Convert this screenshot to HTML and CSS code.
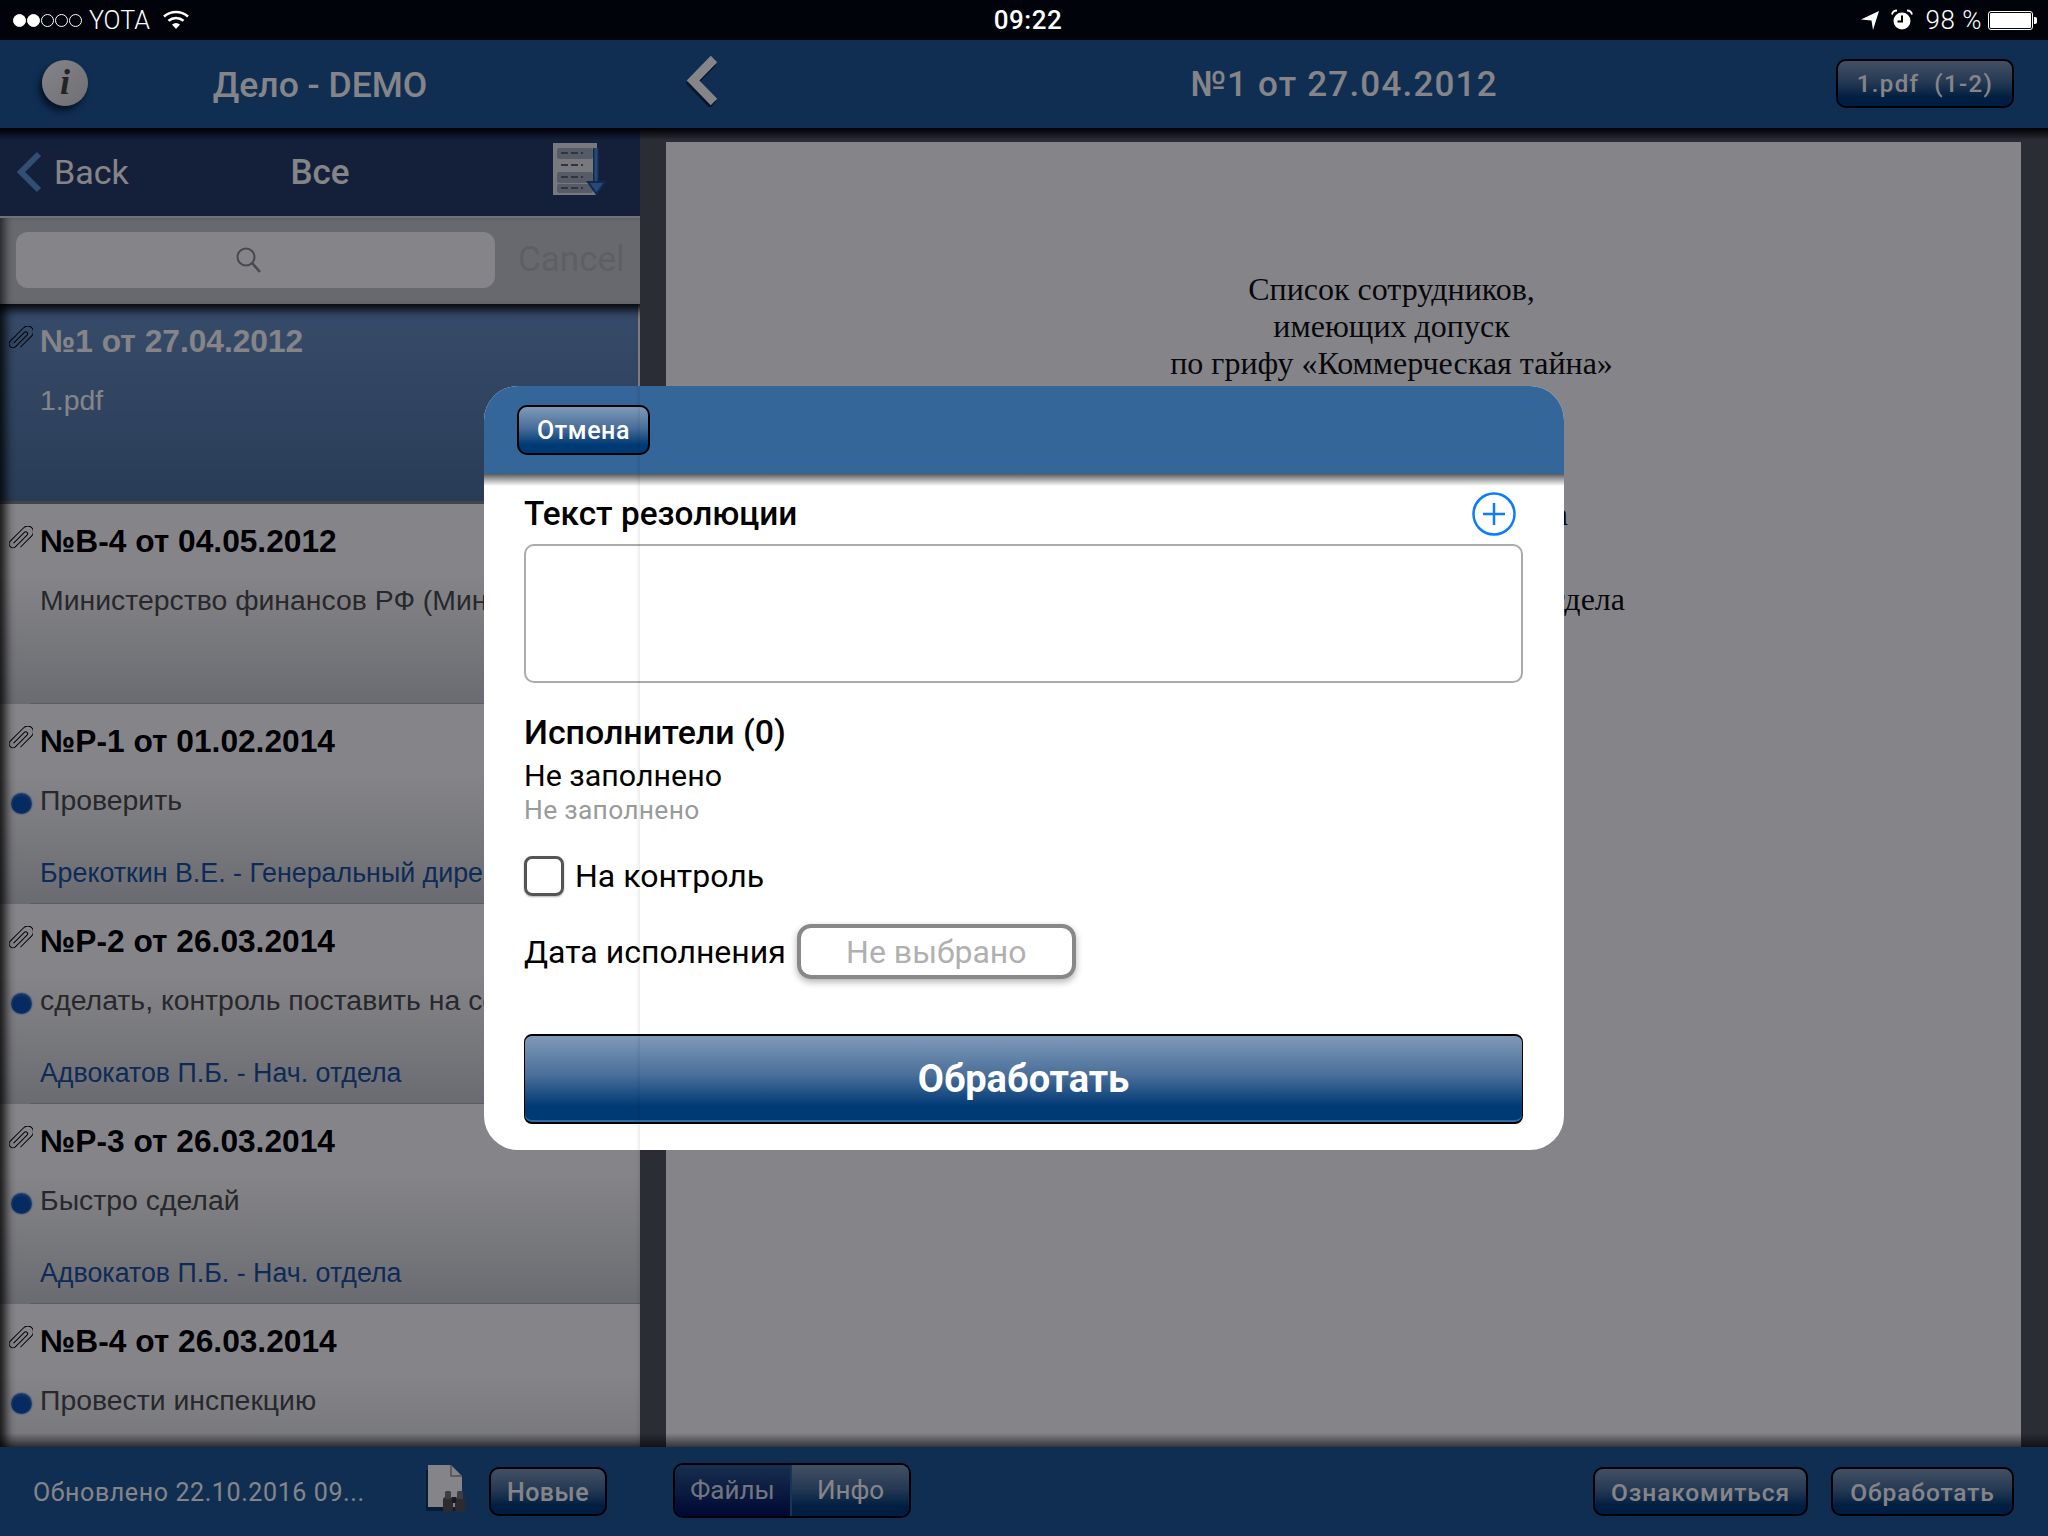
FILE: index.html
```html
<!DOCTYPE html>
<html lang="ru">
<head>
  <meta charset="UTF-8">
  <title>Дело - DEMO</title>
  <link rel="stylesheet" href="styles.css">
</head>
<body>
  <div class="ipad">
    <div class="status">
      <div class="status-left">
        <span class="signal"><i class="on"></i><i class="on"></i><i></i><i></i><i></i></span>
        <span class="carrier">YOTA</span>
        <svg class="wifi" width="26" height="20" viewBox="0 0 26 20">
          <path d="M1 6.5C8 .5 18 .5 25 6.5" fill="none" stroke="#fff" stroke-width="2.6"/>
          <path d="M5.5 10.8C10 7 16 7 20.5 10.8" fill="none" stroke="#fff" stroke-width="2.6"/>
          <path d="M9 14.6C11.5 12.6 14.5 12.6 17 14.6L13 19Z" fill="#fff"/>
        </svg>
      </div>
      <div class="status-time">09:22</div>
      <div class="status-right">
        <svg width="18" height="20" viewBox="0 0 18 20"><path d="M0 9.5 18 1 12 20 10.5 10.5Z" fill="#fff"/></svg>
        <svg class="alarm" width="22" height="22" viewBox="0 0 22 22">
          <circle cx="11" cy="12" r="8.5" fill="#fff"/>
          <path d="M11 6.5V12.5H6.5" fill="none" stroke="#000" stroke-width="2"/>
          <path d="M1 5.500C1.500 3 3.500 1.500 6 1.500M21 5.500C20.500 3 18.500 1.500 16 1.500" fill="none" stroke="#fff" stroke-width="1.8"/>
        </svg>
        <span class="percent">98 %</span>
        <span class="battery"><span class="battery-fill"></span></span>
      </div>
    </div>

    <div class="topbar">
      <div class="top-left">
        <div class="info"><span>i</span></div>
        <div class="top-title">Дело - DEMO</div>
      </div>
      <div class="top-right">
        <svg class="top-back" width="34" height="52" viewBox="0 0 34 52">
          <path d="M28 4 7 25.500 28 47" fill="none" stroke="#000" stroke-opacity=".5" stroke-width="9" transform="translate(-1 3)"/>
          <path d="M28 4 7 25.500 28 47" fill="none" stroke="#fff" stroke-width="9"/>
        </svg>
        <div class="doc-title">№1 от 27.04.2012</div>
        <div class="btn file-btn">1.pdf&nbsp; (1-2)</div>
      </div>
    </div>

    <div class="main">
      <div class="side">
        <div class="side-nav">
          <div class="side-back">
            <svg width="28" height="42" viewBox="0 0 28 42"><path d="M24 3 6 21 24 39" fill="none" stroke="#5f96d8" stroke-width="6"/></svg>
            <span>Back</span>
          </div>
          <div class="side-title">Все</div>
          <svg class="sort-icon" width="58" height="56" viewBox="0 0 58 56">
            <rect x="0" y="1" width="44" height="52" fill="#e6e8ec"/>
            <rect x="4" y="6" width="36" height="11" rx="2" fill="#a8afbc"/>
            <rect x="4" y="30" width="36" height="11" rx="2" fill="#a8afbc"/>
            <rect x="4" y="42" width="36" height="9" rx="2" fill="#a8afbc"/>
            <path d="M8 11H30M8 23H30M8 35H30M8 46H30" stroke="#5f6673" stroke-width="2" stroke-dasharray="7 3"/>
            <path d="M43 6V40" stroke="#1f4f8c" stroke-width="6"/>
            <path d="M43 6V40" stroke="#4d8cd8" stroke-width="3"/>
            <path d="M35 40H52L43.500 52Z" fill="#4d8cd8" stroke="#1f4f8c" stroke-width="2"/>
          </svg>
        </div>
        <div class="search-row">
          <div class="search-field">
            <svg width="28" height="28" viewBox="0 0 28 28">
              <circle cx="11" cy="11" r="8.500" fill="none" stroke="#8b8d90" stroke-width="2"/>
              <path d="M17 17 25 26" stroke="#8b8d90" stroke-width="2.600"/>
            </svg>
          </div>
          <div class="search-cancel">Cancel</div>
        </div>
        <div class="list">
          <div class="row row-active">
            <svg class="clip"><use href="#clip"/></svg>
            <div class="row-title">№1 от 27.04.2012</div>
            <div class="row-sub">1.pdf</div>
          </div>
          <div class="row">
            <svg class="clip"><use href="#clip"/></svg>
            <div class="row-title">№В-4 от 04.05.2012</div>
            <div class="row-sub">Министерство финансов РФ (Минфин)</div>
          </div>
          <div class="row">
            <svg class="clip"><use href="#clip"/></svg>
            <div class="row-title">№Р-1 от 01.02.2014</div>
            <div class="row-sub"><i class="dot"></i>Проверить</div>
            <div class="row-author">Брекоткин В.Е. - Генеральный директор</div>
          </div>
          <div class="row">
            <svg class="clip"><use href="#clip"/></svg>
            <div class="row-title">№Р-2 от 26.03.2014</div>
            <div class="row-sub"><i class="dot"></i>сделать, контроль поставить на себя</div>
            <div class="row-author">Адвокатов П.Б. - Нач. отдела</div>
          </div>
          <div class="row">
            <svg class="clip"><use href="#clip"/></svg>
            <div class="row-title">№Р-3 от 26.03.2014</div>
            <div class="row-sub"><i class="dot"></i>Быстро сделай</div>
            <div class="row-author">Адвокатов П.Б. - Нач. отдела</div>
          </div>
          <div class="row">
            <svg class="clip"><use href="#clip"/></svg>
            <div class="row-title">№В-4 от 26.03.2014</div>
            <div class="row-sub"><i class="dot"></i>Провести инспекцию</div>
          </div>
        </div>
      </div>
      <div class="viewer">
        <div class="page">
          <div class="page-head">
            Список сотрудников,<br>
            имеющих допуск<br>
            по грифу «Коммерческая тайна»
          </div>
          <div class="page-line line-a">Иванова Анна</div>
          <div class="page-line line-b">Адвокатов П.Б. - начальник отдела</div>
        </div>
      </div>
    </div>

    <div class="bottombar">
      <div class="bottom-left">
        <span class="updated">Обновлено 22.10.2016 09...</span>
        <svg class="find-icon" width="44" height="50" viewBox="0 0 44 50">
          <path d="M3 3H27L37 13V44H3Z" fill="#000" fill-opacity=".4" transform="translate(-2 3)"/>
          <path d="M3 1H26L37 12V43H3Z" fill="#fff"/>
          <path d="M26 1V12H37" fill="none" stroke="#999" stroke-width="1.500"/>
          <rect x="18" y="33" width="10" height="15" rx="3" fill="#555"/>
          <rect x="30" y="33" width="10" height="15" rx="3" fill="#555"/>
          <rect x="20" y="27" width="6" height="8" rx="1.500" fill="#777"/>
          <rect x="32" y="27" width="6" height="8" rx="1.500" fill="#777"/>
          <rect x="27" y="33" width="4" height="6" fill="#333"/>
        </svg>
        <div class="btn new-btn">Новые</div>
      </div>
      <div class="segment">
        <div class="seg seg-on"><span>Файлы</span></div>
        <div class="seg">Инфо</div>
      </div>
      <div class="bottom-right">
        <div class="btn act-btn act-long">Ознакомиться</div>
        <div class="btn act-btn act-short">Обработать</div>
      </div>
    </div>

    <div class="dim"></div>

    <div class="dialog">
      <div class="dialog-head">
        <div class="btn cancel-btn">Отмена</div>
      </div>
      <div class="dialog-shade"></div>
      <div class="dialog-body">
        <div class="field-head">
          <div class="field-title">Текст резолюции</div>
          <svg width="44" height="44" viewBox="0 0 44 44">
            <circle cx="22" cy="22" r="20.500" fill="none" stroke="#0a7cff" stroke-width="2.500"/>
            <path d="M22 11V33M11 22H33" stroke="#0a7cff" stroke-width="2.500"/>
          </svg>
        </div>
        <textarea class="res-text"></textarea>
        <div class="field-title people">Исполнители (0)</div>
        <div class="empty">Не заполнено</div>
        <div class="empty-sub">Не заполнено</div>
        <label class="check-row">
          <span class="check"></span>
          <span>На контроль</span>
        </label>
        <div class="date-row">
          <span>Дата исполнения</span>
          <div class="date-field">Не выбрано</div>
        </div>
        <div class="btn submit-btn">Обработать</div>
      </div>
    </div>
  </div>

  <svg width="0" height="0" class="defs">
    <symbol id="clip" viewBox="0 0 24 25">
      <path d="M-2 8V-8A2 2 0 0 1 2-8V9A4 4 0 0 1-6 9V-11A6 6 0 0 1 6-11V6" transform="translate(12 12.500) rotate(45) scale(.95) translate(0 1)" fill="none" stroke="#000" stroke-width="1"/>
    </symbol>
  </svg>
</body>
</html>
```

FILE: styles.css
```css
* { box-sizing: border-box; }
html, body { margin: 0; padding: 0; }
body { font-family: Roboto, "Liberation Sans", sans-serif; background: #000; }
.defs { position: absolute; }

.ipad {
  position: relative;
  width: 2048px;
  height: 1536px;
  overflow: hidden;
  display: flex;
  flex-direction: column;
}

/* status bar */
.status {
  height: 40px;
  background: #00040a;
  color: #fff;
  display: grid;
  grid-template-columns: 1fr auto 1fr;
  align-items: center;
  padding: 0 15px 0 13px;
  position: relative;
  z-index: 3;
}
.status-left { display: flex; align-items: center; }
.signal { display: flex; gap: 1px; }
.signal i { width: 13px; height: 13px; border-radius: 50%; border: 1px solid #fff; }
.signal i.on { background: #fff; }
.carrier { font-size: 25px; margin-left: 7px; font-weight: 300; }
.wifi { margin-left: 13px; }
.status-time { font-size: 26px; font-weight: 500; letter-spacing: .5px; margin-left: 10px; }
.status-right { display: flex; align-items: center; justify-content: flex-end; }
.alarm { margin-left: 12px; }
.percent { font-size: 26px; font-weight: 300; margin-left: 13px; letter-spacing: .5px; }
.battery {
  width: 45px;
  height: 19px;
  margin-left: 6px;
  border: 1px solid #fff;
  border-radius: 3px;
  padding: 1px;
  position: relative;
}
.battery::after {
  content: "";
  position: absolute;
  right: -5px;
  top: 5px;
  width: 3px;
  height: 7px;
  background: #fff;
  border-radius: 0 2px 2px 0;
}
.battery-fill { display: block; height: 100%; background: #fff; border-radius: 1px; }

/* top bar */
.topbar { height: 88px; background: #1d5896; display: flex; color: #fff; }
.top-left {
  width: 640px;
  display: grid;
  grid-template-columns: 1fr auto 1fr;
  align-items: center;
}
.info {
  width: 46px;
  height: 46px;
  margin-left: 42px;
  margin-top: -2px;
  border-radius: 50%;
  background: linear-gradient(135deg, #fff, #d5d5d5);
  box-shadow: -3px 5px 6px rgba(0, 0, 0, .6);
  color: #444;
  font-family: "Liberation Serif", serif;
  font-style: italic;
  font-weight: bold;
  font-size: 36px;
  line-height: 44px;
  text-align: center;
}
.top-title { font-size: 35.5px; font-weight: 500; padding-top: 2px; }
.top-right {
  flex: 1;
  display: grid;
  grid-template-columns: 1fr auto 1fr;
  align-items: center;
}
.top-back { margin-left: 46px; margin-top: -6px; }
.doc-title { font-size: 35px; font-weight: 500; letter-spacing: 1.2px; }
.btn {
  border: 2px solid #000;
  border-radius: 10px;
  background: linear-gradient(#7f9ab8, #4a6f9a 45%, #003a75 82%);
  color: #fff;
  font-weight: 500;
  display: flex;
  align-items: center;
  justify-content: center;
}
.file-btn {
  justify-self: end;
  width: 178px;
  height: 49px;
  margin-right: 34px;
  font-size: 24px;
  letter-spacing: 1.4px;
  white-space: pre;
  margin-top: -2px;
  padding-top: 2px;
}

/* left list + document */
.main { flex: 1; display: flex; min-height: 0; position: relative; }
.main::after {
  content: "";
  position: absolute;
  inset: 0;
  pointer-events: none;
  background: linear-gradient(#000, transparent) top / 100% 12px no-repeat,
    linear-gradient(transparent, rgba(0, 0, 0, .6)) bottom / 100% 14px no-repeat;
}
.side { width: 640px; display: flex; flex-direction: column; min-height: 0; }
.side-nav {
  height: 88px;
  flex-shrink: 0;
  background: #283c69;
  color: #fff;
  display: grid;
  grid-template-columns: 1fr auto 1fr;
  align-items: center;
}
.side-back { display: flex; align-items: center; padding-left: 15px; font-size: 34px; }
.side-back svg { margin-right: 11px; }
.side-title { font-size: 35px; font-weight: 500; }
.sort-icon { justify-self: end; margin-right: 29px; margin-top: -4px; }
.search-row {
  height: 88px;
  flex-shrink: 0;
  background: #c8cacc;
  border-top: 2px solid #d8dadc;
  display: flex;
  align-items: center;
  padding: 0 0 0 16px;
  box-shadow: inset 10px 0 10px -6px rgba(0, 0, 0, .7);
}
.search-field {
  width: 479px;
  height: 56px;
  margin-top: -2px;
  background: #fff;
  border-radius: 12px;
  display: flex;
  align-items: center;
  justify-content: center;
  padding: 0 14px 0 0;
}
.search-cancel { margin-left: 23px; font-size: 35px; color: #b4b6b8; margin-top: -3px; }
.list { flex: 1; min-height: 0; overflow: hidden; position: relative; background: #fff; }
.list::before {
  content: "";
  position: absolute;
  inset: 0;
  z-index: 1;
  pointer-events: none;
  box-shadow: inset 12px 0 10px -6px rgba(0, 0, 0, .8), inset 0 12px 10px -6px rgba(0, 0, 0, .9);
}
.row {
  height: 200px;
  padding: 17px 0 0 40px;
  background: linear-gradient(#fff, #fff 35%, #ccced0);
  position: relative;
  white-space: nowrap;
  overflow: hidden;
}
.row::after {
  content: "";
  position: absolute;
  left: 30px;
  right: 0;
  bottom: 0;
  height: 1px;
  background: #b0b2b6;
}
.row-active {
  background: linear-gradient(#6a92c4, #4f739e);
  margin-right: 2px;
  color: #fff;
}
.row-active::after { left: 0; height: 3px; background: #808488; }
.row-active .row-sub { color: #fff; }
.row-title {
  font-family: "Liberation Sans", sans-serif;
  font-weight: bold;
  font-size: 31.7px;
  line-height: 40px;
}
.clip {
  position: absolute;
  left: 9px;
  top: 22px;
  width: 24px;
  height: 25px;
}
.row-sub {
  position: relative;
  margin-top: 19px;
  font-family: "Liberation Sans", sans-serif;
  font-size: 28.4px;
  line-height: 40px;
  color: #4d4d4d;
}
.dot {
  position: absolute;
  left: -29px;
  top: 13px;
  width: 21px;
  height: 21px;
  border-radius: 50%;
  background: radial-gradient(circle at 50% 55%, #0a53b5 50%, #6d9ade);
  box-shadow: 0 0 2px rgba(30, 80, 160, .8);
}
.row-author {
  margin-top: 33px;
  font-family: "Liberation Sans", sans-serif;
  font-size: 26.8px;
  line-height: 40px;
  color: #1b52a0;
}
.viewer {
  flex: 1;
  background: #53565d;
  padding: 14px 27px 0 26px;
  min-height: 0;
}
.page {
  height: 100%;
  background: #fff;
  font-family: "Liberation Serif", serif;
  font-size: 32px;
  color: #111;
}
.page-head { padding: 129px 0 0 96px; line-height: 37px; text-align: center; }
.page-line { line-height: 37px; text-align: right; }
.line-a { margin-top: 114px; padding-right: 453px; }
.line-b { margin-top: 48px; padding-right: 396px; }

/* bottom bar */
.bottombar {
  height: 89px;
  background: #1d5896;
  color: #fff;
  display: grid;
  grid-template-columns: 640px auto 1fr;
  align-items: center;
}
.bottom-left { display: flex; align-items: center; padding-left: 33px; }
.updated { font-size: 25px; width: 392px; white-space: nowrap; letter-spacing: .6px; padding-top: 2px; }
.find-icon { margin-top: -6px; }
.new-btn { width: 118px; height: 49px; margin-left: 20px; font-size: 25px; letter-spacing: .5px; padding-top: 1px; }
.segment {
  margin-left: 33px;
  width: 238px;
  height: 55px;
  border: 2px solid #000;
  border-radius: 10px;
  overflow: hidden;
  display: flex;
  margin-top: -3px;
}
.seg {
  flex: 1;
  display: flex;
  align-items: center;
  justify-content: center;
  font-size: 26px;
  background: linear-gradient(#7f9ab8, #4a6f9a 45%, #003a75 82%);
}
.seg-on {
  flex: 0 0 117px;
  background: linear-gradient(#2e5a8f, #00105c);
  border-right: 2px solid #2a67a8;
}
.seg-on span { opacity: .85; }
.bottom-right { display: flex; justify-content: flex-end; gap: 23px; padding-right: 34px; }
.act-btn { height: 49px; font-size: 24.5px; letter-spacing: .9px; padding-top: 1px; }
.act-long { width: 215px; }
.act-short { width: 183px; }

/* modal */
.dim {
  position: absolute;
  left: 0;
  right: 0;
  top: 40px;
  bottom: 0;
  background: rgba(0, 0, 9, .48);
}
.dialog {
  position: absolute;
  left: 484px;
  top: 386px;
  width: 1080px;
  height: 764px;
  background: #fff;
  border-radius: 34px;
}
.dialog-head {
  height: 88px;
  background: #34669a;
  border-radius: 34px 34px 0 0;
  padding: 19px 0 0 33px;
}
.cancel-btn { width: 133px; height: 50px; font-size: 25px; letter-spacing: .6px; padding-top: 1px; }
.dialog-shade { height: 12px; background: linear-gradient(#5c5c5c, #fff); }
.dialog-body { padding: 6px 41px 0 40px; color: #000; }
.field-head { display: flex; align-items: center; justify-content: space-between; height: 44px; padding-right: 7px; }
.field-title { font-size: 33.3px; font-weight: 500; line-height: 40px; }
.res-text {
  display: block;
  width: 100%;
  height: 139px;
  margin: 8px 0 0;
  border: 2px solid #ababab;
  border-radius: 10px;
  background: #fff;
  resize: none;
  outline: none;
}
.people { margin-top: 30px; font-size: 33.9px; }
.empty { font-size: 30.4px; line-height: 40px; margin-top: 3px; }
.empty-sub { font-size: 26.4px; line-height: 28px; color: #9a9a9a; letter-spacing: .3px; }
.check-row { display: flex; align-items: center; gap: 11px; margin-top: 32px; font-size: 32px; line-height: 40px; }
.check {
  width: 40px;
  height: 40px;
  border: 3px solid #555;
  border-radius: 8px;
  box-shadow: 0 1px 2px rgba(0, 0, 0, .3);
}
.date-row { display: flex; align-items: center; gap: 11px; margin-top: 28px; font-size: 32px; }
.date-field {
  width: 279px;
  height: 55px;
  border: 4px solid #888;
  border-radius: 14px;
  box-shadow: 0 3px 7px rgba(0, 0, 0, .3);
  color: #b0b0b0;
  display: flex;
  align-items: center;
  justify-content: center;
}
.submit-btn {
  height: 90px;
  margin-top: 55px;
  font-size: 38px;
  font-weight: 700;
  border-width: 2px 1px;
  border-radius: 8px;
  box-shadow: inset 0 -2px 0 #2f6aa5;
}
```
